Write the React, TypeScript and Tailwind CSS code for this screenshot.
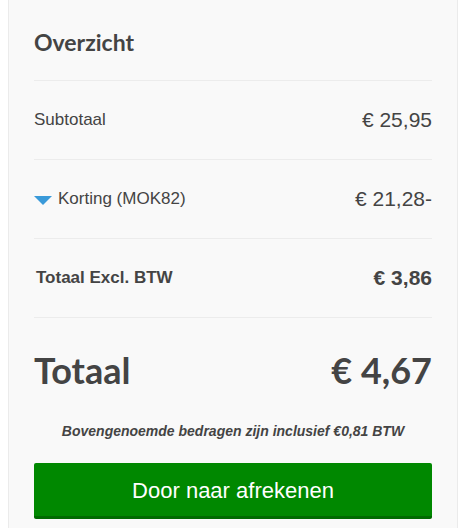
import React from 'react';

const lato = { fontFamily: 'Lato, "Open Sans", sans-serif' };

type Line = { label: React.ReactNode; amount: string; bold?: boolean };

const lines: Line[] = [
  { label: 'Subtotaal', amount: '€ 25,95' },
  {
    label: (
      <span className="flex items-center gap-[6px]">
        <svg width="18" height="9" viewBox="0 0 18 9" className="mt-[2px]">
          <polygon points="0,0 18,0 9,9" fill="#3a9ad9" />
        </svg>
        Korting (MOK82)
      </span>
    ),
    amount: '€ 21,28-',
  },
  { label: 'Totaal Excl. BTW', amount: '€ 3,86', bold: true },
];

export default function App() {
  return (
    <div className="min-h-[528px] bg-white px-2 font-['Liberation_Sans',Arial,sans-serif] text-[#444]">
      <div className="min-h-[528px] border-x border-[#ebebeb] bg-[#f9f9f9] px-[25px]">
        <div className="flex h-[80px] items-center pt-1">
          <h2 className="text-[23px] font-bold" style={lato}>
            Overzicht
          </h2>
        </div>

        {lines.map((l, i) => (
          <div key={i} className="flex h-[79px] items-center justify-between border-t border-[#ececec]">
            <div className={l.bold ? 'pl-[2px] text-[17px] font-bold' : 'text-[17px]'}>{l.label}</div>
            <div className={l.bold ? 'text-[21px] font-bold' : 'text-[21px]'}>{l.amount}</div>
          </div>
        ))}

        <div
          className="flex h-[104px] items-center justify-between border-t border-[#ececec] text-[36px] font-bold"
          style={lato}
        >
          <span>Totaal</span>
          <span>€ 4,67</span>
        </div>

        <p className="text-center text-[14px] leading-5 font-bold italic">
          Bovengenoemde bedragen zijn inclusief €0,81 BTW
        </p>

        <button className="mt-[22px] flex h-[56px] w-full items-center justify-center rounded-[2px] border-b-[3px] border-[#006a00] bg-[#008800] pt-[1px] text-[22px] text-white">
          Door naar afrekenen
        </button>
      </div>
    </div>
  );
}
